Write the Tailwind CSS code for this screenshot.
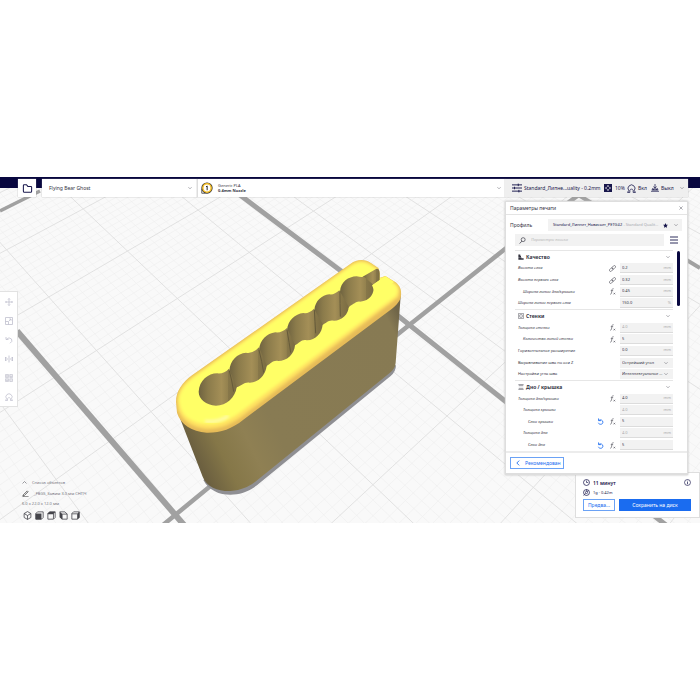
<!DOCTYPE html>
<html lang="ru">
<head>
<meta charset="utf-8">
<meta name="viewport" content="width=device-width, initial-scale=1">
<title>Параметры печати</title>
<script src="https://cdn.jsdelivr.net/npm/@tailwindcss/browser@4"></script>
</head>
<body class="flex min-h-screen flex-col justify-center bg-white font-['Noto_Sans','Liberation_Sans',sans-serif] text-[4px] leading-[6px] text-[#33333f]">

<svg class="hidden" aria-hidden="true">
  <symbol id="chev" viewBox="0 0 10 10"><path d="M1 3l4 4 4-4" fill="none" stroke="#66666e" stroke-width="1.300"/></symbol>
  <symbol id="back" viewBox="0 0 10 10"><path d="M7 1L3 5l4 4" fill="none" stroke="currentColor" stroke-width="1.500"/></symbol>
  <symbol id="link" viewBox="0 0 16 16"><g fill="none" stroke="#55555f" stroke-width="1.500"><rect x="6.500" y="2.500" width="9" height="5.500" rx="2.750" transform="rotate(-45 11 5.250)"/><rect x=".5" y="8" width="9" height="5.500" rx="2.750" transform="rotate(-45 5 10.750)"/></g></symbol>
  <symbol id="fx" viewBox="0 0 16 16"><path d="M10.500 1.700c-2-.8-3.200.3-3.500 2L5.500 12c-.3 1.700-1.300 2.500-3 1.900M4 6h5.500M10.500 11l3.500 3.500M14 11l-3.500 3.500" fill="none" stroke="#44444e" stroke-width="1.300"/></symbol>
  <symbol id="undo" viewBox="0 0 16 16"><path d="M3.500 1v5h5.500M4 5.500C8 2.500 13.500 5 13.500 9.500C13.500 15.500 5 16 3 11" fill="none" stroke="currentColor" stroke-width="1.900"/></symbol>
  <symbol id="quality" viewBox="0 0 16 16"><path d="M1 1h5v3.500H1zM1 4.500h7v3.500H1zM1 8.500h8V11H1zM1 11h14v4H1z" fill="currentColor"/></symbol>
  <symbol id="walls" viewBox="0 0 16 16"><g fill="none" stroke="#55555f" stroke-width="1.500"><rect x="1" y="1" width="14" height="14" rx="1"/><rect x="4.500" y="4.500" width="7" height="7" rx="1.500"/></g></symbol>
  <symbol id="topbottom" viewBox="0 0 16 16"><path d="M1 1.500h14M2 4.500h12M2 11.500h12M1 14.500h14" fill="none" stroke="#44444e" stroke-width="1.400"/></symbol>
  <symbol id="support" viewBox="0 0 16 16"><path d="M3 11.500A6.200 6.200 0 1 1 13 11.500M1 15h4v-3.500l3-3 3 3V15h4M3 11.500L1 15M13 11.500l2 3.500" fill="none" stroke="currentColor" stroke-width="1.400"/></symbol>
</svg>

<main class="relative flex flex-col overflow-hidden bg-[#f9f9f9]">
  <svg id="scene" class="absolute inset-0 h-full w-full" viewBox="0 177 700 346" preserveAspectRatio="xMidYMid slice" role="img" aria-label="Модель на столе принтера">
    <defs>
      <linearGradient id="side" x1="60" y1="520" x2="720" y2="200" gradientUnits="userSpaceOnUse">
        <stop offset="0" stop-color="#6c6040"/><stop offset=".1" stop-color="#857748"/><stop offset=".22" stop-color="#8f8053"/><stop offset=".34" stop-color="#887b53"/><stop offset=".95" stop-color="#877a53"/><stop offset="1" stop-color="#6f6548"/>
      </linearGradient>
      <linearGradient id="hole" x1="0" x2="1" y1="0" y2="0">
        <stop offset="0" stop-color="#6f6340"/><stop offset=".25" stop-color="#8b7b4b"/><stop offset=".6" stop-color="#a48f57"/><stop offset=".76" stop-color="#94824f"/><stop offset=".78" stop-color="#877749"/><stop offset="1" stop-color="#7b6c43"/>
      </linearGradient>
      <filter id="soft" x="-10%" y="-10%" width="120%" height="120%"><feGaussianBlur stdDeviation="5"/></filter>
      <clipPath id="topclip"><path d="M48 455C48 425 66 398 96 376L572 41C592 27 615 27 634 40L655 54C658 60 660 70 659 84L676 78L702 94C718 104 726 118 723 138C721 152 711 164 696 176L250 509C215 537 180 549 140 548C95 545 62 523 51 488Z"/></clipPath>
    </defs>
    <g id="grid"></g>
    <g fill="none" stroke="#a1a1a1">
      <path d="M0 211L40 191" stroke-width="3.500"/>
      <path d="M17 331L184 525" stroke-width="6"/>
      <path d="M240 195L353 280L505 401L666 525" stroke-width="5"/>
      <path d="M163 525L286 424L408 326L505 249L580 194" stroke-width="4.500"/>
      <path d="M570 190L700 268" stroke-width="4"/>
    </g>
    <g transform="translate(160 250) scale(.33333)">
      <path d="M130 690C150 728 190 738 230 733C262 727 280 715 300 698L692 378Q708 364 708 345Z" fill="#8f8f93"/>
      <path d="M50 455L62 510L128 680C140 712 175 724 212 723C245 720 262 712 285 696L690 368Q706 355 707 338L723 125L600 60Z" fill="url(#side)"/>
      <g clip-path="url(#topclip)">
        <path d="M0 0H780V600H0Z" fill="#e6bb58"/>
        <path d="M52 455C52 424 70 400 99 379L573 44C593 30 614 30 633 43L655 57L660 82L676 79L701 96C717 106 722 120 715 142L248 498C212 526 175 538 140 537C98 534 64 512 54 478Z" fill="#ffe060" filter="url(#soft)"/>
        <path d="M57 452C57 427 74 403 102 382L574 48C594 34 612 34 631 46L652 60L661 84L676 82L698 99C714 109 717 122 707 139L242 486C206 513 174 525 140 523C100 520 68 502 60 468Z" fill="#ffff66" filter="url(#soft)"/>
        <path d="M135 514Q175 518 205 498" fill="none" stroke="#fff9b0" stroke-width="9" filter="url(#soft)"/>
      </g>
      <g fill="url(#hole)">
        <path d="M608 80L648 57Q658 54 659 70V90L640 104Q630 118 610 120Z"/>
        <path d="M540 125C542 95 565 80 590 79Q604 82 612 80L640 104C645 130 630 152 600 155C588 153 582 163 570 168L540 202Z"/>
        <path d="M463 180C466 152 485 136 508 133Q522 136 538 121L566 170C566 192 545 212 522 212C505 208 498 220 488 224L466 250Z"/>
        <path d="M381 240C384 210 405 192 430 189Q446 192 462 176L488 222C487 250 465 272 440 271C424 267 418 280 405 286L386 315Z"/>
        <path d="M297 300C300 270 320 250 346 247Q364 250 381 234L405 284C404 312 380 333 355 333C338 330 334 340 320 348L304 378Z"/>
        <path d="M208 362C210 332 232 310 258 308Q278 312 297 292L320 346C318 376 294 399 268 398C252 396 244 408 230 412L216 430Z"/>
        <path d="M116 425C118 392 144 370 172 370Q192 372 207 356L230 412C226 442 200 467 168 467C138 465 116 448 116 425Z"/>
      </g>
      <path d="M208 362Q216 392 221 425M297 300Q306 335 311 368M381 240Q388 280 392 308M463 180Q465 215 467 250M540 125Q540 160 541 200" fill="none" stroke="#655a3a" stroke-width="3"/>
      <path d="M636 106L676 79L702 96L648 134Z" fill="#ffff66"/>
    </g>
  </svg>

  <div class="absolute inset-x-0 top-0 h-[11px] bg-[#08073f]"></div>

  <header class="relative flex h-[20px] pt-[2px] pr-[12px] pl-[18px]">
    <button aria-label="Открыть файл" class="mr-[6px] flex w-[18px] items-center justify-center bg-white text-[#17164b] shadow-[0_0_1px_#999]">
      <svg class="size-[11px]" viewBox="0 0 16 16"><path d="M2 3.500Q2 2.500 3 2.500H6.500L8.500 5H13Q14 5 14 6V12Q14 13.500 12.500 13.500H3.500Q2 13.500 2 12Z" fill="none" stroke="currentColor" stroke-width="1.500"/></svg>
    </button>
    <button class="flex w-[155px] items-center justify-between bg-white pr-[5px] pl-[7px] text-[5px] shadow-[0_0_1px_#999]">Flying Bear Ghost<svg class="size-[4px]"><use href="#chev"/></svg></button>
    <button class="flex flex-1 items-center border-l border-[#ddd] bg-white pr-[4px] pl-[3px] text-left shadow-[0_0_1px_#999]">
      <svg class="mr-[5px] size-[12px]" viewBox="0 0 16 16"><circle cx="8" cy="8" r="6" fill="#fff" stroke="#2b2b35" stroke-width="3"/><circle cx="8" cy="8" r="5.600" fill="#fff" stroke="#f4bd22" stroke-width="2"/><path d="M1 9v6h5" fill="none" stroke="#333" stroke-width="1"/><path d="M6.700 6.500l1.500-1.200V11" fill="none" stroke="#222" stroke-width="1.300"/></svg>
      <span class="flex-1 leading-[5px]"><span class="block">Generic PLA</span><span class="block font-bold">0.4mm Nozzle</span></span>
      <svg class="size-[4px]"><use href="#chev"/></svg>
    </button>
    <button class="flex w-[183px] items-center bg-[#efefef] pr-[4px] pl-[7px] text-[5px] text-[#17164b] shadow-[0_0_1px_#999]">
      <svg class="mr-[2px] size-[10px]" viewBox="0 0 16 16"><path d="M0 3h16M0 8h16M0 13h16M10 1v4M4 6v4M11 11v4" stroke="currentColor" stroke-width="1.500"/></svg>
      <span class="flex-1 text-left whitespace-nowrap">Standard_Липне...uality - 0.2mm</span>
      <svg class="mr-[3px] size-[8px]" viewBox="0 0 16 16"><path d="M0 0h16v16H0z" fill="currentColor"/><path d="M8 2l2.500 3h-5zM8 14l2.500-3h-5zM2 8l3-2.500v5zM14 8l-3-2.500v5z" fill="#fff"/></svg>
      <span class="w-[12px] text-left">10%</span>
      <svg class="mr-[2px] size-[9px]"><use href="#support"/></svg>
      <span class="w-[13px] text-left">Вкл</span>
      <svg class="mr-[2px] size-[8px]" viewBox="0 0 16 16"><path d="M8 0v8M5 5l3 3.500L11 5M4 8l-2 4h12l-2-4M0 14.500h16M5 12v-2h6v2" fill="none" stroke="currentColor" stroke-width="1.500"/></svg>
      <span class="w-[19px] text-left">Выкл</span>
      <svg class="size-[4px]"><use href="#chev"/></svg>
    </button>
  </header>

  <div class="relative flex flex-1 items-stretch justify-between">
    <div class="flex flex-col justify-between pt-[94px] pb-[1px]">
      <nav aria-label="Инструменты" class="flex w-[18px] flex-col border border-l-0 border-[#e2e2e2] bg-white text-[#bcbccb]">
        <button aria-label="Переместить" class="flex h-[19px] items-center justify-center"><svg class="size-[8px]" viewBox="0 0 16 16"><path d="M8 1v14M1 8h14M6 3l2-2 2 2M6 13l2 2 2-2M3 6L1 8l2 2M13 6l2 2-2 2" fill="none" stroke="currentColor" stroke-width="1.500"/></svg></button>
        <button aria-label="Масштаб" class="flex h-[19px] items-center justify-center"><svg class="size-[8px]" viewBox="0 0 16 16"><path d="M1 1h14v14H1zM1 9h6v6M8 8l4-4M8.500 4H12v3.500" fill="none" stroke="currentColor" stroke-width="1.500"/></svg></button>
        <button aria-label="Повернуть" class="flex h-[19px] items-center justify-center"><svg class="size-[8px]" viewBox="0 0 16 16"><path d="M2 2v5h5M3 6.500Q8 1 13 6Q16 11 10 14.500" fill="none" stroke="currentColor" stroke-width="1.500"/></svg></button>
        <button aria-label="Отразить" class="flex h-[19px] items-center justify-center"><svg class="size-[8px]" viewBox="0 0 16 16"><path d="M8 1v14M1 4v8l4-4zM15 4v8l-4-4z" fill="none" stroke="currentColor" stroke-width="1.600"/></svg></button>
        <button aria-label="Настройки модели" class="flex h-[19px] items-center justify-center"><svg class="size-[8px]" viewBox="0 0 16 16"><path d="M1 1h6v6H1zM9.500 1H15v6H9.500zM1 9.500h6V15H1zM9.500 9.500H15V15H9.500zM3 3h2v2H3zM11 3v3M13 3v3M3 11v3M5 11v3M10 12h4" fill="none" stroke="currentColor" stroke-width="1.300"/></svg></button>
        <button aria-label="Поддержка" class="flex h-[19px] items-center justify-center"><svg class="size-[8px]"><use href="#support"/></svg></button>
      </nav>
      <section aria-label="Объекты" class="pl-[22px] text-[#77777f]">
        <button class="flex h-[11px] items-center gap-[5px]"><svg class="size-[5px] rotate-180"><use href="#chev"/></svg>Список объектов</button>
        <p class="flex h-[11px] items-center gap-[5px]"><svg class="size-[7px] text-[#333]" viewBox="0 0 16 16"><path d="M3 11L12 2l2 2-9 9-3 .5zM1 15.500h14" fill="none" stroke="currentColor" stroke-width="1.600"/></svg>_FBGS_Зажим 3.0 мм СНПЧ</p>
        <p class="flex h-[9px] items-center">6.0 x 22.0 x 12.0 мм</p>
        <div class="flex h-[14px] items-center gap-[3px] pl-[1px] text-[#44444a]">
          <button aria-label="Трёхмерный вид"><svg class="size-[9px]" viewBox="0 0 16 16"><path d="M8 1l6 3.500v7L8 15l-6-3.500v-7zM2 4.500L8 8l6-3.500M8 8v7" fill="none" stroke="currentColor" stroke-width="1.400"/></svg></button>
          <button aria-label="Вид спереди"><svg class="size-[9px]" viewBox="0 0 16 16"><path d="M1.500 4.500l3-3h10v10l-3 3h-10z" fill="none" stroke="currentColor" stroke-width="1.400"/><path d="M1 4.500h10.500v10.500H1z" fill="currentColor"/></svg></button>
          <button aria-label="Вид сверху"><svg class="size-[9px]" viewBox="0 0 16 16"><path d="M1.500 4.500l3-3h10v10l-3 3h-10zM1.500 5h10v9" fill="none" stroke="currentColor" stroke-width="1.400"/><path d="M1 5.500l3.500-4H15l-3.500 4z" fill="currentColor"/></svg></button>
          <button aria-label="Вид слева"><svg class="size-[9px]" viewBox="0 0 16 16"><path d="M5.500 5.500h9v9h-9zM1.500 1.500h9l4 4" fill="none" stroke="currentColor" stroke-width="1.400"/><path d="M1 1l4.500 4v10L1 11z" fill="currentColor"/></svg></button>
          <button aria-label="Вид справа"><svg class="size-[9px]" viewBox="0 0 16 16"><path d="M1.500 4.500l3-3h10v10l-3 3h-10zM1.500 5h10" fill="none" stroke="currentColor" stroke-width="1.400"/><path d="M11 5l4-4v10.500l-4 3.500z" fill="currentColor"/></svg></button>
        </div>
      </section>
    </div>

    <aside class="flex w-[195px] flex-col items-end pt-[4px] pb-[5px]">
      <section aria-labelledby="ptitle" class="relative z-10 mr-[12px] w-[183px] border border-b-2 border-[#dedede] bg-white shadow-[0_0_2px_#bbb]">
        <div class="flex h-[13px] items-center justify-between border-b border-[#e4e4e4] pr-[4px] pl-[4px]">
          <h1 id="ptitle" class="text-[5px]">Параметры печати</h1>
          <button aria-label="Закрыть"><svg class="size-[4px]" viewBox="0 0 10 10"><path d="M1 1l8 8M9 1L1 9" stroke="#55555f" stroke-width="1.200"/></svg></button>
        </div>
        <div class="mt-[4px] flex h-[12px] items-center pr-[5px] pl-[4px]">
          <span id="plabel" class="w-[38px] text-[5px]">Профиль</span>
          <button aria-labelledby="plabel" class="flex h-full min-w-0 flex-1 items-center bg-[#f2f2f2] pr-[4px] pl-[5px] text-left text-[#17164b]">
            <span class="min-w-0 flex-1 whitespace-nowrap">Standard_Липнет_Нависает_PETG#2 <span class="text-[#a8a8b0]">- Standard Qualit...</span></span>
            <svg class="mr-[6px] size-[5px]" viewBox="0 0 16 16"><path d="M8 0l2.400 5.300 5.600.6-4.200 3.800L13 15.500l-5-3-5 3 1.200-5.800L0 5.900l5.600-.6z" fill="currentColor"/></svg>
            <svg class="size-[4px]"><use href="#chev"/></svg>
          </button>
        </div>
        <div class="mt-[3px] flex h-[12px] items-center gap-[6px] pr-[9px] pl-[9px]">
          <label class="flex h-full flex-1 items-center gap-[5px] bg-[#f2f2f2] pl-[4px]">
            <svg class="size-[7px]" viewBox="0 0 16 16"><circle cx="9.500" cy="6" r="4.500" fill="none" stroke="currentColor" stroke-width="1.500"/><path d="M6.500 9.500L1.500 15" stroke="currentColor" stroke-width="1.700"/></svg>
            <input type="search" aria-label="Параметры поиска" placeholder="Параметры поиска" class="min-w-0 flex-1 italic outline-none placeholder:text-[#b9b9b9]">
          </label>
          <button aria-label="Видимость настроек" class="text-[#17164b]"><svg class="size-[8px]" viewBox="0 0 16 16"><path d="M0 2h16M0 8h16M0 14h16" stroke="currentColor" stroke-width="1.800"/></svg></button>
        </div>
        <div class="mt-[4px] flex items-start gap-[4px] pr-[7px] pl-[9px]">
          <div id="list" class="flex h-[201px] flex-1 flex-col"></div>
          <div class="mt-[1px] h-[55px] w-[3px] rounded-sm bg-[#08073f]"></div>
        </div>
        <div class="border-t-2 border-[#ececec] p-[4px]">
          <button class="flex h-[12px] w-[54px] items-center gap-[4px] border border-[#6ba2f5] pl-[4px] text-[5px] text-[#1a6cf0]"><svg class="size-[6px]"><use href="#back"/></svg>Рекомендован</button>
        </div>
      </section>

      <section aria-label="Результат" class="mt-[-3px] w-[125px] border border-[#dedede] bg-white pt-[4px] pr-[8px] pb-[6px] pl-[7px] text-[#17164b]">
        <div class="flex h-[11px] items-center gap-[3px]">
          <svg class="size-[7px]" viewBox="0 0 16 16"><circle cx="8" cy="8" r="6.800" fill="none" stroke="currentColor" stroke-width="1.700"/><path d="M8 3.500V8h4" fill="none" stroke="currentColor" stroke-width="1.500"/></svg>
          <span class="flex-1 text-[5px] font-semibold">11 минут</span>
          <svg class="size-[7px]" viewBox="0 0 16 16"><circle cx="8" cy="8" r="6.800" fill="none" stroke="currentColor" stroke-width="1.500"/><path d="M8 7v5M8 4v1.700" stroke="currentColor" stroke-width="1.700"/></svg>
        </div>
        <div class="flex h-[9px] items-center gap-[3px]">
          <svg class="size-[7px]" viewBox="0 0 16 16"><circle cx="8" cy="8" r="6.800" fill="none" stroke="currentColor" stroke-width="1.700"/><circle cx="8" cy="8" r="2.500" fill="none" stroke="currentColor" stroke-width="1.500"/><path d="M1 15l5-5M8 1v4M12 3L9 7" stroke="currentColor" stroke-width="1.300"/></svg>
          <span>1g · 0.42m</span>
        </div>
        <div class="mt-[2px] flex h-[12px] gap-[4px] text-[5px]">
          <button class="w-[32px] border border-[#6ba2f5] text-[#1a6cf0]">Предва...</button>
          <button class="flex-1 bg-[#1a6cf0] text-white">Сохранить на диск</button>
        </div>
      </section>
    </aside>
  </div>
</main>

<script>
// Settings: [label, indent, italic, icons, value, unit, dimmed]; an object with cat starts a category.
const rows = [
  { cat: 'Качество', icon: 'quality' },
  ['Высота слоя', 0, 1, ['link'], '0.2', 'mm'],
  ['Высота первого слоя', 0, 1, ['link'], '0.32', 'mm'],
  ['Ширина линии дна/крышки', 1, 1, ['fx'], '0.45', 'mm'],
  ['Ширина линии первого слоя', 0, 1, [], '150.0', '%'],
  { cat: 'Стенки', icon: 'walls' },
  ['Толщина стенки', 0, 1, ['fx'], '4.0', 'mm', 1],
  ['Количество линий стенки', 1, 1, ['fx'], '5', ''],
  ['Горизонтальное расширение', 0, 0, [], '0.0', 'mm'],
  ['Выравнивание шва по оси Z', 0, 0, [], 'Острейший угол', null],
  ['Настройки угла шва', 0, 0, [], 'Интеллектуальное скрытие', null],
  { cat: 'Дно / крышка', icon: 'topbottom' },
  ['Толщина дна/крышки', 0, 1, ['fx'], '4.0', 'mm'],
  ['Толщина крышки', 1, 1, [], '4.0', 'mm', 1],
  ['Слои крышки', 2, 1, ['undo', 'fx'], '5', ''],
  ['Толщина дна', 1, 1, [], '4.0', 'mm', 1],
  ['Слои дна', 2, 1, ['undo', 'fx'], '5', ''],
];
const indents = ['pl-[3px]', 'pl-[8px]', 'pl-[13px]'];
document.getElementById('list').innerHTML = rows.map((r, i) => {
  if (r.cat) return `<button class="flex flex-1 items-center border-t border-[#e6e6e6] pr-[3px] pl-[3px] text-left text-[5px] font-bold"><svg class="mr-[2px] size-[6px]"><use href="#${r.icon}"/></svg><span class="flex-1">${r.cat}</span><svg class="size-[4px]"><use href="#chev"/></svg></button>`;
  const [label, ind, it, icons, val, unit, dim] = r;
  const ic = icons.map(n => `<svg class="${n === 'undo' ? 'size-[7px] text-[#1a6cf0]' : 'size-[7px]'}"><use href="#${n}"/></svg>`).join('');
  const field = unit === null
    ? `<div class="relative h-[10px] w-[53px] bg-[#f2f2f2]"><select id="s${i}" class="h-full w-full appearance-none truncate pr-[10px] pl-[2px]"><option>${val}</option></select><svg class="absolute top-[3px] right-[5px] size-[4px]"><use href="#chev"/></svg></div>`
    : `<div class="flex h-[10px] w-[53px] items-center border-b border-[#dcdcdc] bg-[#f2f2f2] px-[2px]"><input id="s${i}" value="${val}" class="${dim ? 'min-w-0 flex-1 text-[#aaa] outline-none' : 'min-w-0 flex-1 outline-none'}"><span class="text-[#aaa]">${unit}</span></div>`;
  return `<div class="flex flex-1 items-center ${indents[ind]}"><label for="s${i}" class="${it ? 'flex-1 whitespace-nowrap italic' : 'flex-1 whitespace-nowrap'}">${label}</label><span class="mr-[4px] flex gap-[5px]">${ic}</span>${field}</div>`;
}).join('');

// Build-plate grid: plane coordinates to screen through a homography.
const pts = [[1, 1, 48.700, 297], [3, 1, 198, 210], [3, 5, 447, 416], [5, 4, 495, 255]];
const m = [];
for (const [u, v, x, y] of pts) {
  m.push([u, v, 1, 0, 0, 0, -u * x, -v * x, x]);
  m.push([0, 0, 0, u, v, 1, -u * y, -v * y, y]);
}
for (let c = 0; c < 8; c++) {
  let p = c;
  for (let r = c + 1; r < 8; r++) if (Math.abs(m[r][c]) > Math.abs(m[p][c])) p = r;
  [m[c], m[p]] = [m[p], m[c]];
  for (let r = 0; r < 8; r++) if (r !== c) {
    const f = m[r][c] / m[c][c];
    for (let k = c; k < 9; k++) m[r][k] -= f * m[c][k];
  }
}
const h = m.map((r, i) => r[8] / r[i]);
const at = (u, v) => {
  const w = h[6] * u + h[7] * v + 1;
  return w < 0.1 ? null : [(h[0] * u + h[1] * v + h[2]) / w, (h[3] * u + h[4] * v + h[5]) / w];
};
const line = (a, b, c, d) => {
  let s = '';
  for (let t = 0; t <= 40; t++) {
    const p = at(a + (c - a) * t / 40, b + (d - b) * t / 40);
    if (p) s += (s ? 'L' : 'M') + p[0].toFixed(1) + ' ' + p[1].toFixed(1);
  }
  return s;
};
let minor = '', major = '';
for (let i = -30; i <= 110; i++) {
  const d = line(i / 10, -3, i / 10, 9) + line(-3, i / 10, 11, i / 10);
  if (i % 10) minor += d; else major += d;
}
document.getElementById('grid').innerHTML = `<path d="${minor}" fill="none" stroke="#efefef" stroke-width=".6"/><path d="${major}" fill="none" stroke="#dfdfdf" stroke-width=".9"/>`;
</script>
</body>
</html>
